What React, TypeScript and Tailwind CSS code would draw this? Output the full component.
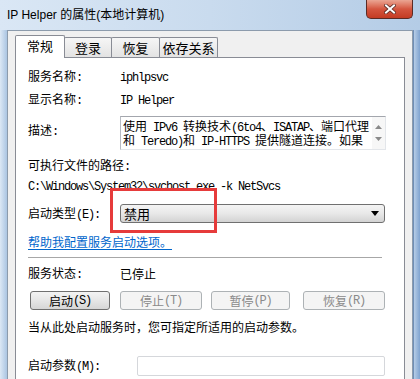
import React from 'react';

// ascii runs render in a narrow serif mono, like SimSun's half-width latin
const Mixed: React.FC<{ s: string }> = ({ s }) => {
  const parts = s.split(/([\x20-\x7e]+)/).filter(p => p !== '');
  return (
    <>
      {parts.map((p, i) =>
        /[\x20-\x7e]/.test(p) ? (
          <span key={i} className="font-['Liberation_Mono',monospace] tracking-[-1.2px] whitespace-pre">
            {p}
          </span>
        ) : (
          <span key={i}>{p}</span>
        )
      )}
    </>
  );
};

const Tab: React.FC<{ label: string; active?: boolean; width: string }> = ({ label, active, width }) =>
  active ? (
    <div className={`${width} h-[23px] bg-white border border-b-0 border-[#898c95] rounded-t-[2px] flex items-center justify-center text-[13px] pb-[2px]`}>
      {label}
    </div>
  ) : (
    <div className={`${width} h-[20px] mb-[1px] -ml-px bg-gradient-to-b from-[#f6f6f6] to-[#e3e3e3] border border-b-0 border-[#898c95] rounded-t-[2px] flex items-center justify-center text-[13px]`}>
      {label}
    </div>
  );

const Btn: React.FC<{ label: string; disabled?: boolean; className: string }> = ({ label, disabled, className }) => (
  <div
    className={
      disabled
        ? `${className} h-[19px] rounded-[3px] border border-[#adb2b5] bg-[#f4f4f4] text-[#8a8a8a] flex items-center justify-center`
        : `${className} h-[19px] rounded-[3px] border border-[#707070] bg-gradient-to-b from-[#f3f3f3] via-[#e6e6e6] to-[#d6d6d6] text-black flex items-center justify-center`
    }
  >
    <Mixed s={label} />
  </div>
);

const App: React.FC = () => {
  return (
    <div className="w-[420px] h-[379px] overflow-hidden flex flex-col bg-[#bcd2ea] text-[12px] text-black font-['Noto_Sans_CJK_SC',sans-serif]">
      {/* Title bar */}
      <div className="h-[30px] shrink-0 flex items-start justify-between bg-gradient-to-r from-[#dae7f5] via-[#c9dbee] to-[#b4cce6]">
        <div className="pl-[7px] pt-[5px] leading-[20px] text-[12px] font-['Liberation_Sans','Noto_Sans_CJK_SC',sans-serif]">
          IP Helper 的属性(本地计算机)
        </div>
        <div className="mr-[7px] w-[47px] h-[19px] rounded-b-[5px] border border-t-0 border-[#5b2b25] bg-gradient-to-b from-[#eaa593] via-[#d4553f] to-[#c33b23] flex items-center justify-center">
          <svg width="12" height="10" viewBox="0 0 12 10">
            <path d="M2 1.5 L10 8.5 M10 1.5 L2 8.5" stroke="#5a2a24" strokeWidth="3.6" strokeLinecap="square" />
            <path d="M2 1.5 L10 8.5 M10 1.5 L2 8.5" stroke="#ffffff" strokeWidth="2" strokeLinecap="square" />
          </svg>
        </div>
      </div>

      {/* Frame + body */}
      <div className="flex flex-1 min-h-0">
        <div className="w-[7px] shrink-0 bg-gradient-to-r from-[#dce8f5] to-[#abc5e2]" />
        <div className="w-[406px] shrink-0 bg-[#f0f0f0] border-t border-l border-r border-[#8c9bac] pt-[4px] px-[7px] flex flex-col">
          {/* Tabs */}
          <div className="relative z-10 flex items-end h-[23px] -mb-px">
            <Tab label="常规" active width="w-[50px]" />
            <Tab label="登录" width="w-[48px]" />
            <Tab label="恢复" width="w-[49px]" />
            <Tab label="依存关系" width="w-[59px]" />
          </div>

          {/* Panel */}
          <div className="relative h-[340px] shrink-0 bg-white border border-[#898c95] pl-[12px]">
            <div className="mt-[11px] h-[16px] flex items-center">
              <div className="w-[92px]"><Mixed s="服务名称:" /></div>
              <div><Mixed s="iphlpsvc" /></div>
            </div>
            <div className="mt-[7px] h-[16px] flex items-center">
              <div className="w-[92px]"><Mixed s="显示名称:" /></div>
              <div><Mixed s="IP Helper" /></div>
            </div>
            <div className="mt-[8px] flex items-start">
              <div className="w-[92px] pt-[6px] leading-[16px]"><Mixed s="描述:" /></div>
              <div className="relative w-[266px] h-[34px] border border-[#e3e6ea] border-t-[#a3a6ad] border-l-[#b8bbc2] pl-[2px] pt-[2px] leading-[14px] overflow-hidden">
                <div className="h-[14px] whitespace-nowrap"><Mixed s="使用 IPv6 转换技术(6to4、ISATAP、端口代理" /></div>
                <div className="h-[14px] whitespace-nowrap"><Mixed s="和 Teredo)和 IP-HTTPS 提供隧道连接。如果" /></div>
                <div className="absolute right-0 top-0 w-[13px] h-full bg-[#f7f7f7] flex flex-col items-center justify-between py-[8px]">
                  <svg width="7" height="4" viewBox="0 0 7 4"><path d="M0 4 L3.5 0 L7 4 Z" fill="#8a8a8a" /></svg>
                  <svg width="7" height="4" viewBox="0 0 7 4"><path d="M0 0 L3.5 4 L7 0 Z" fill="#8a8a8a" /></svg>
                </div>
              </div>
            </div>
            <div className="mt-[7px] leading-[16px]"><Mixed s="可执行文件的路径:" /></div>
            <div className="mt-[2px] leading-[16px] whitespace-nowrap">
              <Mixed s="C:\Windows\System32\svchost.exe -k NetSvcs" />
            </div>
            <div className="mt-[9px] h-[19px] flex items-center">
              <div className="w-[92px]"><Mixed s="启动类型(E):" /></div>
              <div className="w-[265px] h-[19px] rounded-[3px] border border-[#707070] bg-gradient-to-b from-[#f4f4f4] via-[#e8e8e8] to-[#d3d3d3] flex items-center justify-between pl-[3px] pr-[5px]">
                <span className="text-[13px]">禁用</span>
                <svg width="8" height="5" viewBox="0 0 8 5"><path d="M0 0 L8 0 L4 5 Z" fill="#000" /></svg>
              </div>
            </div>
            <div className="mt-[11px] leading-[16px] text-[#0066cc] underline underline-offset-2">
              帮助我配置服务启动选项。
            </div>
            <div className="mt-[7px] h-px w-[354px] bg-[#a7a7a7]" />
            <div className="mt-[8px] h-[16px] flex items-center">
              <div className="w-[92px]"><Mixed s="服务状态:" /></div>
              <div>已停止</div>
            </div>
            <div className="mt-[9px] flex">
              <Btn label="启动(S)" className="ml-[2px] w-[80px]" />
              <Btn label="停止(T)" disabled className="ml-[10px] w-[82px]" />
              <Btn label="暂停(P)" disabled className="ml-[9px] w-[79px]" />
              <Btn label="恢复(R)" disabled className="ml-[13px] w-[82px]" />
            </div>
            <div className="mt-[9px] leading-[16px] whitespace-nowrap">
              当从此处启动服务时，您可指定所适用的启动参数。
            </div>
            <div className="mt-[21px] h-[20px] flex items-center">
              <div className="w-[109px]"><Mixed s="启动参数(M):" /></div>
              <div className="w-[248px] h-[20px] border border-[#d5d7db] rounded-[2px] bg-white" />
            </div>

            {/* red highlight */}
            <div className="absolute left-[94px] top-[130px] w-[107px] h-[45px] border-[3px] border-[#e63b3b]" />
          </div>
        </div>
        <div className="flex-1 bg-gradient-to-r from-[#b7cde6] to-[#7fa3d0] border-l border-[#6f8fb8]" />
      </div>
    </div>
  );
};

export default App;
